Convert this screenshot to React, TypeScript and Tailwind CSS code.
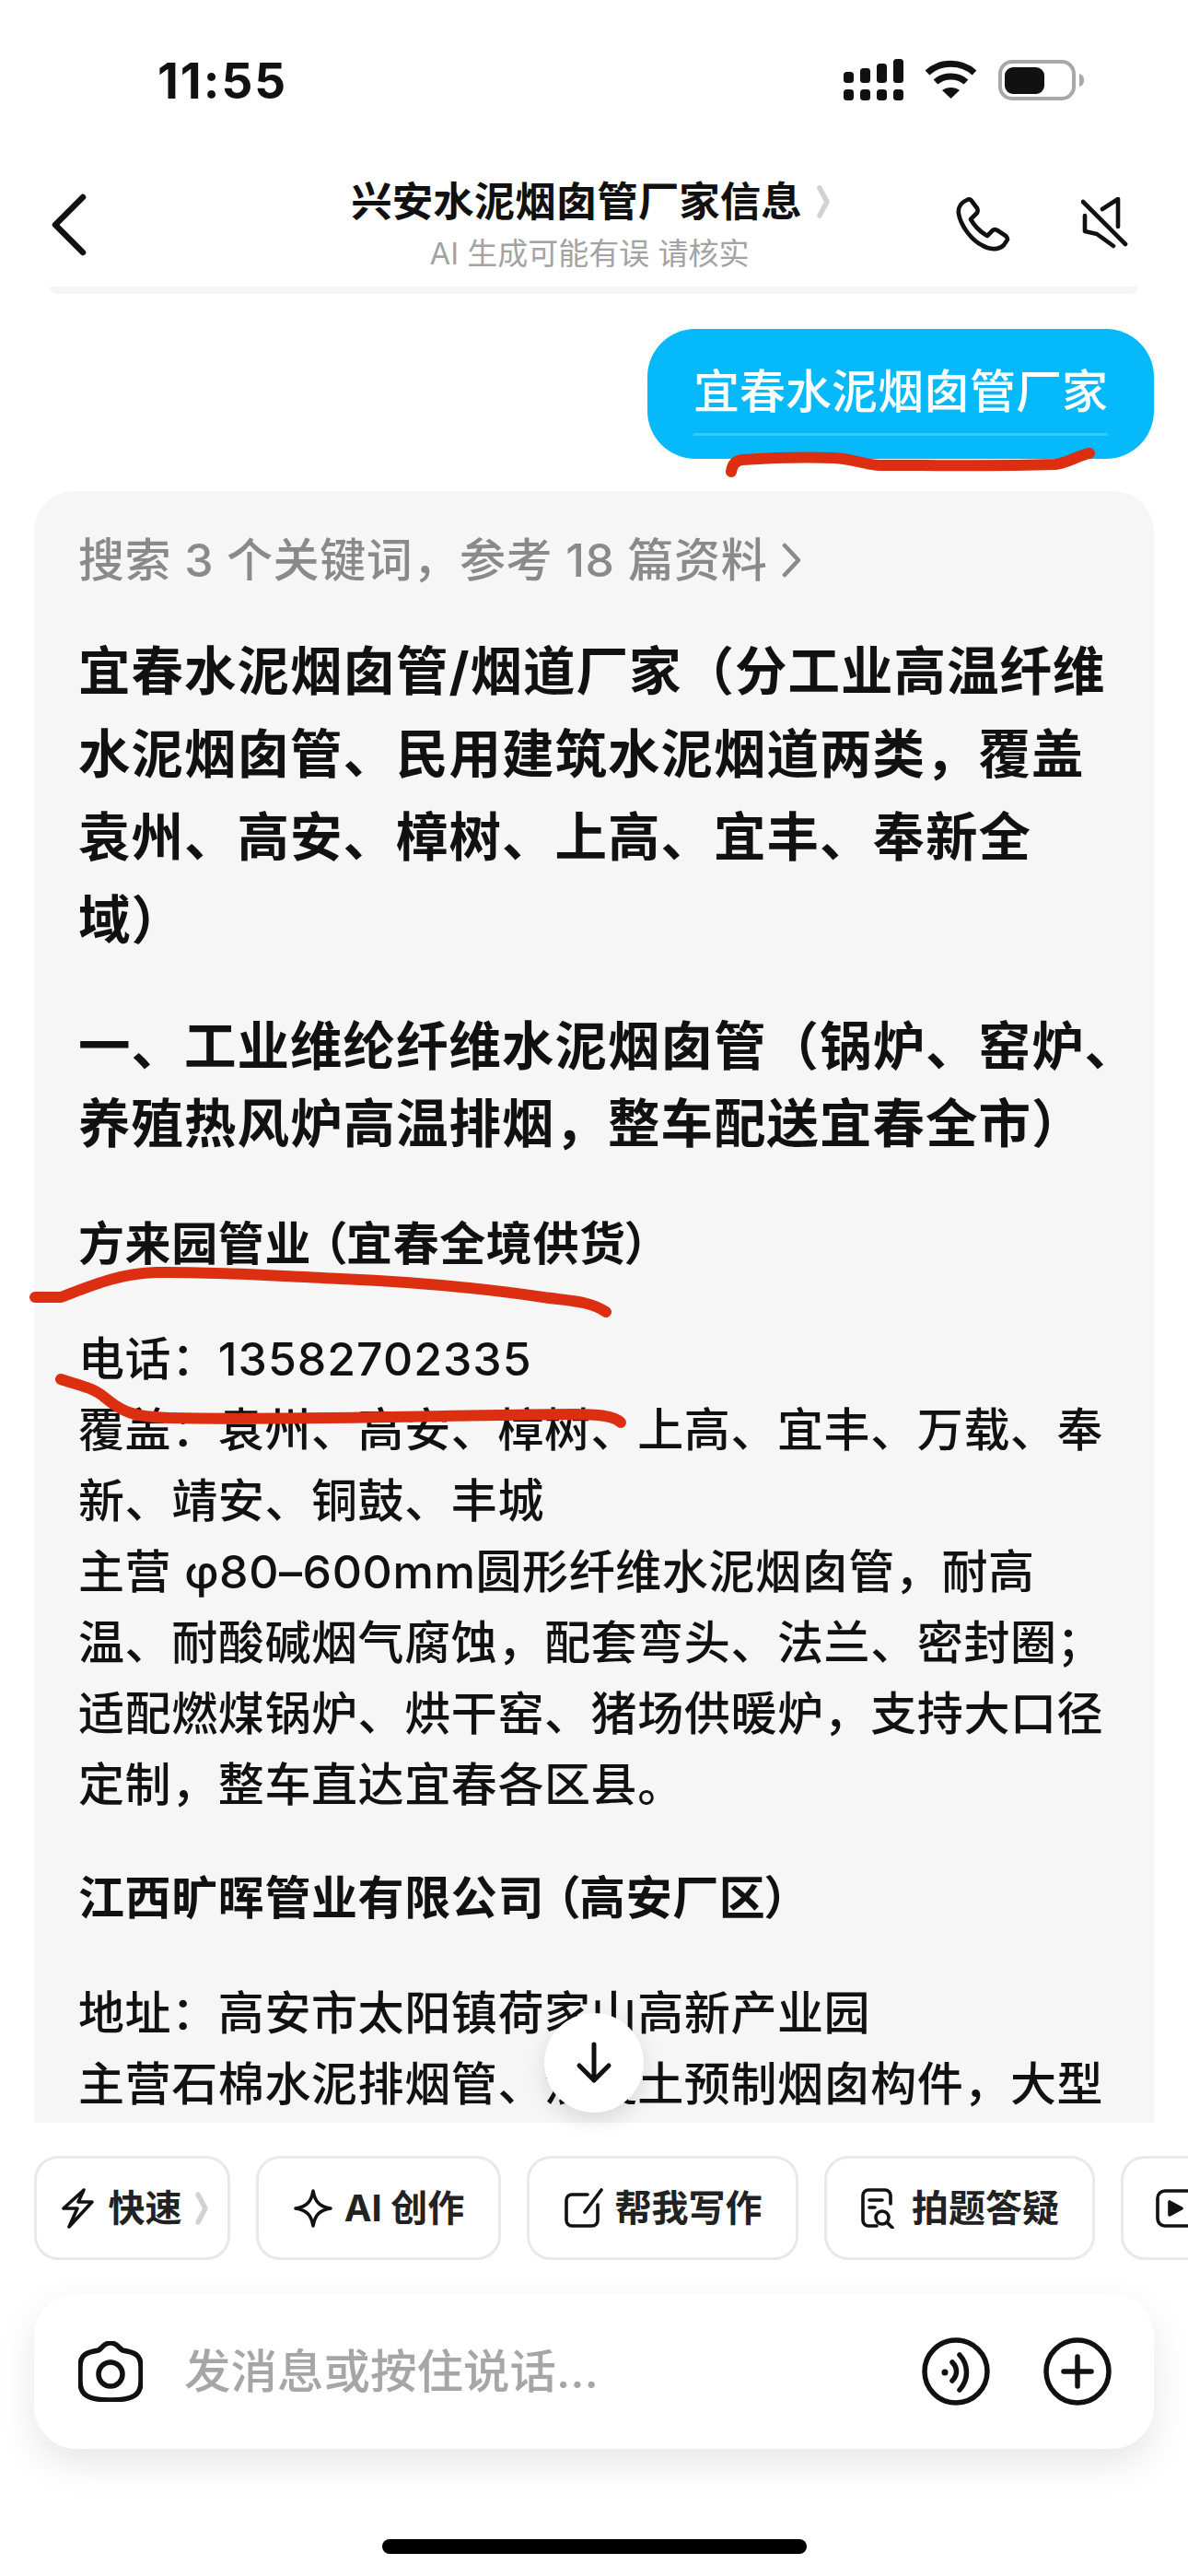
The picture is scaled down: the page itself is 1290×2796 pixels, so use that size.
import type { ReactNode } from "react"

const font = "font-['Inter','Noto_Sans_CJK_SC',sans-serif]"

const chips = [
  { label: "快速", width: "w-[213px]", icon: "bolt", more: true },
  { label: "AI 创作", width: "w-[266px]", icon: "spark" },
  { label: "帮我写作", width: "w-[295px]", icon: "write" },
  { label: "拍题答疑", width: "w-[294px]", icon: "scan" },
  { label: "", width: "w-[120px]", icon: "play" },
]

function ChipIcon({ name }: { name: string }) {
  const props = {
    width: 44,
    height: 44,
    viewBox: "0 0 44 44",
    fill: "none",
    stroke: "#111",
    strokeWidth: 3.6,
    strokeLinecap: "round" as const,
    strokeLinejoin: "round" as const,
  }
  if (name === "bolt")
    return (
      <svg {...props}>
        <path d="M29 2 7 22h15l-9 20 25-27H23l6-13z" />
      </svg>
    )
  if (name === "spark")
    return (
      <svg {...props}>
        <path d="M22 3c2 12 7 17 19 19-12 2-17 7-19 19-2-12-7-17-19-19 12-2 17-7 19-19z" />
      </svg>
    )
  if (name === "write")
    return (
      <svg {...props}>
        <path d="M26 7H9a6 6 0 0 0-6 6v22a6 6 0 0 0 6 6h22a6 6 0 0 0 6-6V18" />
        <path d="M41 2 23 26" />
      </svg>
    )
  if (name === "scan")
    return (
      <svg {...props}>
        <path d="M18 41H9a6 6 0 0 1-6-6V8a6 6 0 0 1 6-6h18a6 6 0 0 1 6 6v9" />
        <path d="M10 13h14M10 21h6" />
        <circle cx="24" cy="32" r="7" />
        <path d="m29 37 6 6" />
      </svg>
    )
  return (
    <svg {...props}>
      <rect x="2" y="3" width="40" height="38" rx="8" />
      <path d="M15 15v14l13-7z" fill="#111" />
    </svg>
  )
}

function SmallChevron({ className }: { className?: string }) {
  return (
    <svg width="14" height="36" viewBox="0 0 14 36" fill="none" stroke="#d2d2d2" strokeWidth="5.5" strokeLinecap="round" strokeLinejoin="round" className={className}>
      <path d="M3 3l8 15-8 15" />
    </svg>
  )
}

function Line({ children }: { children: ReactNode }) {
  return <div className="whitespace-nowrap">{children}</div>
}

function Scribble({ d }: { d: string }) {
  return <path d={d} fill="none" stroke="#dc2f12" strokeWidth="12" strokeLinecap="round" strokeLinejoin="round" />
}

export default function App() {
  return (
    <div className={`relative w-[1290px] h-[2796px] bg-white overflow-hidden flex flex-col text-[#111] ${font}`}>
      {/* status bar */}
      <div className="h-[176px] pl-[171px] pr-[113px] pt-[58px] flex justify-between items-start shrink-0">
        <span className="text-[53px] leading-[60px] font-bold tracking-[2px]">11:55</span>
        <div className="flex items-start gap-[23px] pt-[6px]">
          <svg width="65" height="45" viewBox="0 0 65 45" fill="#111">
            <rect x="0" y="14" width="11" height="12" rx="3.5" />
            <rect x="18" y="10" width="11" height="16" rx="3.5" />
            <rect x="36" y="5" width="11" height="21" rx="3.5" />
            <rect x="54" y="0" width="11" height="26" rx="3.5" />
            <rect x="0" y="33" width="11" height="12" rx="3.5" />
            <rect x="18" y="33" width="11" height="12" rx="3.5" />
            <rect x="36" y="33" width="11" height="12" rx="3.5" />
            <rect x="54" y="33" width="11" height="12" rx="3.5" />
          </svg>
          <svg width="57" height="42" viewBox="0 0 57 42" fill="none" stroke="#111" strokeWidth="7" className="mt-[1px]">
            <path d="M3 14C17 1 40 1 54 14" />
            <path d="M12 24c9-8 24-8 33 0" />
            <path d="M28.500 42 19 33c5-4 14-4 19 0z" fill="#111" stroke="none" />
          </svg>
          <svg width="93" height="44" viewBox="0 0 93 44" fill="none" className="mt-[1px]">
            <rect x="2" y="2" width="80" height="40" rx="13" stroke="#a8a8a8" strokeWidth="4" />
            <rect x="7" y="8" width="43" height="29" rx="9" fill="#111" />
            <path d="M88 15c3 1 5 3 5 7s-2 6-5 7z" fill="#a8a8a8" />
          </svg>
        </div>
      </div>

      {/* header */}
      <div className="relative h-[135px] shrink-0 flex flex-col items-center">
        <div className="absolute left-[54px] top-[34px]">
          <svg width="42" height="68" viewBox="0 0 42 68" fill="none" stroke="#111" strokeWidth="6.5" strokeLinecap="round" strokeLinejoin="round">
            <path d="M36 4 6 34l30 30" />
          </svg>
        </div>
        <div className="flex items-center gap-[16px] -ml-[8px] pt-[15px]">
          <span className="text-[44.5px] leading-[56px] font-bold">兴安水泥烟囱管厂家信息</span>
          <SmallChevron />
        </div>
        <span className="text-[33px] leading-[40px] text-[#a3a3a3] mt-[8px] -ml-[10px]">AI 生成可能有误 请核实</span>
        <div className="absolute right-[192px] top-[38px]">
          <svg width="60" height="60" viewBox="0 0 60 60" fill="none" stroke="#111" strokeWidth="4.6" strokeLinecap="round" strokeLinejoin="round">
            <path d="M12 3C5 6 2 12 3 18c2 12 13 28 25 34 8 5 18 6 24 0l4-6c0-2-1-3-2-4l-9-6c-2-1-4-1-5 0l-6 6c-7-4-14-11-18-18l7-7c1-2 1-3 0-5l-6-8c-1-2-3-2-5-1z" />
          </svg>
        </div>
        <div className="absolute right-[64px] top-[38px]">
          <svg width="52" height="56" viewBox="0 0 52 56" fill="none" stroke="#111" strokeWidth="4.6" strokeLinecap="round" strokeLinejoin="round">
            <path d="M2 5l46 46" />
            <path d="M23 13 40 2v30" />
            <path d="M4 20v17l13 3 18 13" />
          </svg>
        </div>
      </div>
      <div className="mx-[54px] h-[8px] rounded-b-[12px] bg-[#f5f5f5] shrink-0" />

      {/* messages */}
      <div className="flex-1 min-h-0 overflow-hidden flex flex-col px-[37px]">
        <div className="self-end mt-[38px] h-[141px] w-[550px] rounded-[52px] bg-[#06b9fb] flex justify-center pt-[38px] shrink-0">
          <div className="h-[78px] text-[50px] leading-[60px] font-medium text-white border-b-[3px] border-[#35c8fd]">宜春水泥烟囱管厂家</div>
        </div>
        <div className="mt-[35px] flex-1 rounded-t-[44px] bg-[#f6f6f6] px-[48px] pt-[44px] overflow-hidden tracking-[0.6px] font-medium">
          <div className="flex items-center text-[50px] leading-[62px] text-[#8a8a8a]">
            <span>搜索 3 个关键词，参考 18 篇资料</span>
            <svg width="26" height="40" viewBox="0 0 26 40" fill="none" stroke="#8a8a8a" strokeWidth="4.5" strokeLinecap="round" strokeLinejoin="round" className="ml-[14px]">
              <path d="M5 4l15 16L5 36" />
            </svg>
          </div>
          <div className="mt-[45px] text-[56.5px] leading-[90px] font-bold tracking-[1px]">
            <Line>宜春水泥烟囱管/烟道厂家（分工业高温纤维</Line>
            <Line>水泥烟囱管、民用建筑水泥烟道两类，覆盖</Line>
            <Line>袁州、高安、樟树、上高、宜丰、奉新全</Line>
            <Line>域）</Line>
          </div>
          <div className="mt-[50px] text-[56.5px] leading-[84px] font-bold tracking-[1px]">
            <Line>一、工业维纶纤维水泥烟囱管（锅炉、窑炉、</Line>
            <Line>养殖热风炉高温排烟，整车配送宜春全市）</Line>
          </div>
          <div className="mt-[50px] text-[50px] leading-[76px] font-bold [font-feature-settings:'palt']">方来园管业 （宜春全境供货）</div>
          <div className="mt-[49px] text-[50px] leading-[77px]">
            <Line>
              电话：<span className="tracking-[1px]">13582702335</span>
            </Line>
            <Line>覆盖：袁州、高安、樟树、上高、宜丰、万载、奉</Line>
            <Line>新、靖安、铜鼓、丰城</Line>
            <Line>主营 φ80–600mm圆形纤维水泥烟囱管，耐高</Line>
            <Line>温、耐酸碱烟气腐蚀，配套弯头、法兰、密封圈；</Line>
            <Line>适配燃煤锅炉、烘干窑、猪场供暖炉，支持大口径</Line>
            <Line>定制，整车直达宜春各区县。</Line>
          </div>
          <div className="mt-[46px] text-[50px] leading-[76px] font-bold [font-feature-settings:'palt']">江西旷晖管业有限公司 （高安厂区）</div>
          <div className="mt-[49px] text-[50px] leading-[77px]">
            <Line>地址：高安市太阳镇荷家山高新产业园</Line>
            <Line>主营石棉水泥排烟管、混凝土预制烟囱构件，大型</Line>
          </div>
        </div>
      </div>

      {/* chips */}
      <div className="h-[492px] shrink-0 pt-[36px]">
        <div className="flex gap-[28px] pl-[37px] overflow-hidden">
          {chips.map((chip) => (
            <div
              key={chip.icon}
              className={`${chip.width} h-[113px] shrink-0 rounded-[26px] border-[3px] border-[#e9e9e9] bg-white flex items-center justify-center gap-[12px]`}
            >
              <ChipIcon name={chip.icon} />
              {chip.label && <span className="text-[40px] font-bold text-[#222]">{chip.label}</span>}
              {chip.more && <SmallChevron className="ml-[2px]" />}
            </div>
          ))}
        </div>

        {/* input */}
        <div className="mx-[37px] mt-[37px] h-[168px] rounded-[46px] bg-white shadow-[0_16px_40px_rgba(0,0,0,0.1)] flex items-center pl-[48px] pr-[46px]">
          <svg width="70" height="66" viewBox="0 0 70 66" fill="none" stroke="#111" strokeWidth="5.500" strokeLinejoin="round">
            <path d="M22 10c4-2 5-8 13-8s9 6 13 8c12 2 20 4 20 18v16c0 14-8 20-33 20S2 58 2 44V28c0-14 8-16 20-18z" />
            <circle cx="35" cy="36" r="13" />
          </svg>
          <span className="ml-[45px] flex-1 text-[50.5px] font-medium text-[#a6a6a6]">发消息或按住说话...</span>
          <svg width="74" height="74" viewBox="0 0 74 74" fill="none" stroke="#111" strokeWidth="5.5" strokeLinecap="round">
            <circle cx="37" cy="37" r="34" />
            <circle cx="25" cy="38" r="3.5" fill="#111" stroke="none" />
            <path d="M33 27c6 6 6 14 0 20" />
            <path d="M41 19c10 11 10 27 0 38" />
          </svg>
          <svg width="74" height="74" viewBox="0 0 74 74" fill="none" stroke="#111" strokeWidth="5.5" strokeLinecap="round" className="ml-[58px]">
            <circle cx="37" cy="37" r="34" />
            <path d="M22 37h30M37 21v32" />
          </svg>
        </div>
      </div>

      <div className="absolute left-[415px] top-[2756px] w-[461px] h-[16px] rounded-full bg-black" />

      {/* scroll to bottom button */}
      <div className="absolute left-[591px] top-[2185px] w-[108px] h-[108px] rounded-full bg-white shadow-[0_8px_24px_rgba(0,0,0,0.12)] flex items-center justify-center">
        <svg width="44" height="46" viewBox="0 0 44 46" fill="none" stroke="#111" strokeWidth="5" strokeLinecap="round" strokeLinejoin="round">
          <path d="M22 3v39M6 26l16 16 16-16" />
        </svg>
      </div>

      {/* red pen marks on top of the screenshot */}
      <svg className="absolute left-0 top-0 pointer-events-none" width="1290" height="2796">
        <Scribble d="M794 512c1-8 5-12 12-13 30-2 70-3 100-2 20 1 30 7 50 8 60 0 130 1 190-1 15-2 25-10 37-12" />
        <Scribble d="M38 1408H66C100 1395 130 1382 170 1381C230 1380 300 1385 370 1388C440 1391 510 1396 590 1408C620 1412 640 1412 658 1424" />
        <Scribble d="M66 1497c14 5 34 8 48 20 18 15 30 21 70 22 140 3 300-3 440-4 22 0 42 1 50 9" />
      </svg>
    </div>
  )
}
